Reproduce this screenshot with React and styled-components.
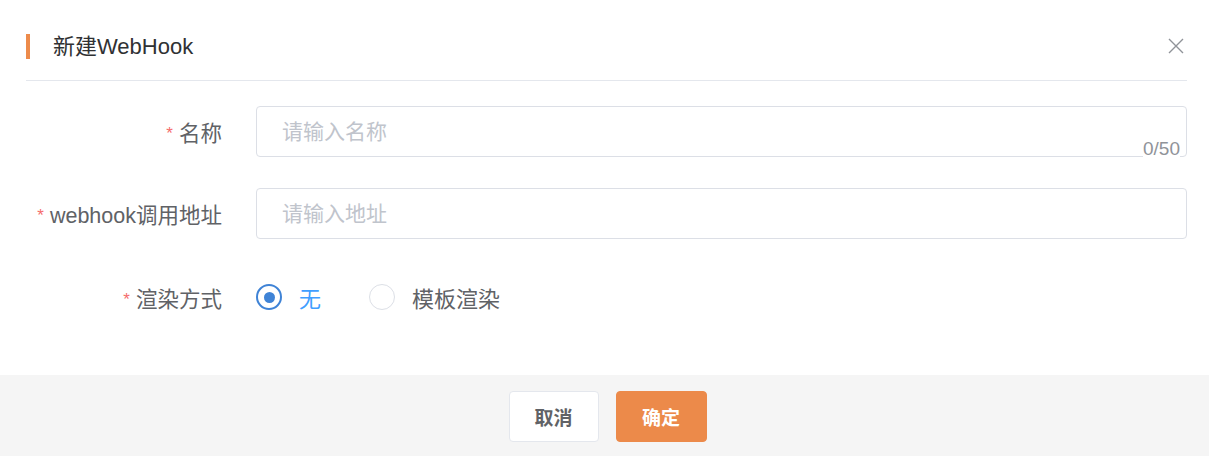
import styled, { createGlobalStyle } from "styled-components";

const Global = createGlobalStyle`
  body {
    margin: 0;
    background: #fff;
    font-family: "Helvetica Neue", "Liberation Sans", "Noto Sans CJK SC", sans-serif;
  }
`;

const Dialog = styled.div`
  width: 1209px;
  height: 456px;
  display: flex;
  flex-direction: column;
  background: #fff;
`;

const Header = styled.div`
  margin: 0 22px 0 26px;
  height: 81px;
  display: flex;
  align-items: center;
  justify-content: space-between;
  border-bottom: 1px solid #e4e7ed;
  box-sizing: border-box;
  padding-top: 12px;
`;

const Title = styled.h2`
  margin: 0;
  font-size: 22px;
  font-weight: 400;
  color: #303133;
  border-left: 4px solid #ed8b4b;
  padding-left: 23px;
  line-height: 25px;
`;

const Close = styled.button`
  border: none;
  background: none;
  padding: 0;
  width: 18px;
  height: 18px;
  margin-right: 2px;
  color: #909399;
  cursor: pointer;
`;

const Body = styled.div`
  flex: 1;
  padding: 25px 22px 0 0;
  display: flex;
  flex-direction: column;
  gap: 31px;
`;

const Row = styled.div`
  display: grid;
  grid-template-columns: 222px 1fr;
  column-gap: 34px;
  align-items: center;
  min-height: ${(p) => p.$h || 51}px;
  position: relative;
`;

const Label = styled.label`
  text-align: right;
  font-size: 21.5px;
  color: #606266;
  white-space: nowrap;
  &::before {
    content: "*";
    color: #f56c6c;
    margin-right: 6px;
    font-size: 17px;
    vertical-align: 2px;
  }
`;

const Input = styled.input`
  height: 51px;
  box-sizing: border-box;
  border: 1px solid #dcdfe6;
  border-radius: 4px;
  padding: 0 25px;
  font-size: 21px;
  font-family: inherit;
  color: #606266;
  outline: none;
  &::placeholder {
    color: #c0c4cc;
  }
`;

const Counter = styled.span`
  position: absolute;
  right: 7px;
  bottom: -1px;
  font-size: 19px;
  color: #909399;
  background: #fff;
  line-height: 19px;
`;

const Radios = styled.div`
  display: flex;
  align-items: center;
  gap: 48px;
`;

const Radio = styled.label`
  display: flex;
  align-items: center;
  gap: 17px;
  font-size: 22px;
  color: ${(p) => (p.$on ? "#409eff" : "#606266")};
  cursor: pointer;
`;

const Dot = styled.span`
  width: 26px;
  height: 26px;
  box-sizing: border-box;
  border-radius: 50%;
  border: ${(p) => (p.$on ? "2px solid #3f83d6" : "1px solid #dcdfe6")};
  display: flex;
  align-items: center;
  justify-content: center;
  &::after {
    content: "";
    width: 11px;
    height: 11px;
    border-radius: 50%;
    background: ${(p) => (p.$on ? "#3f83d6" : "transparent")};
  }
`;

const Footer = styled.div`
  height: 81px;
  background: #f5f5f5;
  display: flex;
  align-items: flex-start;
  justify-content: center;
  gap: 17px;
  padding: 16px 0 0 6px;
  box-sizing: border-box;
`;

const Button = styled.button`
  width: ${(p) => (p.$primary ? 91 : 90)}px;
  height: 51px;
  border-radius: 4px;
  font-size: 19px;
  font-weight: 700;
  font-family: inherit;
  border: 1px solid ${(p) => (p.$primary ? "#ec8a4a" : "#e4e7ed")};
  background: ${(p) => (p.$primary ? "#ec8a4a" : "#fff")};
  color: ${(p) => (p.$primary ? "#fff" : "#606266")};
  cursor: pointer;
`;

export default function App() {
  return (
    <Dialog>
      <Global />
      <Header>
        <Title>新建WebHook</Title>
        <Close aria-label="close">
          <svg width="18" height="18" viewBox="0 0 18 18">
            <path d="M2 2L16 16M16 2L2 16" stroke="currentColor" strokeWidth="1.4" />
          </svg>
        </Close>
      </Header>
      <Body>
        <Row>
          <Label>名称</Label>
          <Input placeholder="请输入名称" />
          <Counter>0/50</Counter>
        </Row>
        <Row>
          <Label>webhook调用地址</Label>
          <Input placeholder="请输入地址" />
        </Row>
        <Row $h={54}>
          <Label>渲染方式</Label>
          <Radios>
            <Radio $on>
              <Dot $on />无
            </Radio>
            <Radio>
              <Dot />模板渲染
            </Radio>
          </Radios>
        </Row>
      </Body>
      <Footer>
        <Button>取消</Button>
        <Button $primary>确定</Button>
      </Footer>
    </Dialog>
  );
}
